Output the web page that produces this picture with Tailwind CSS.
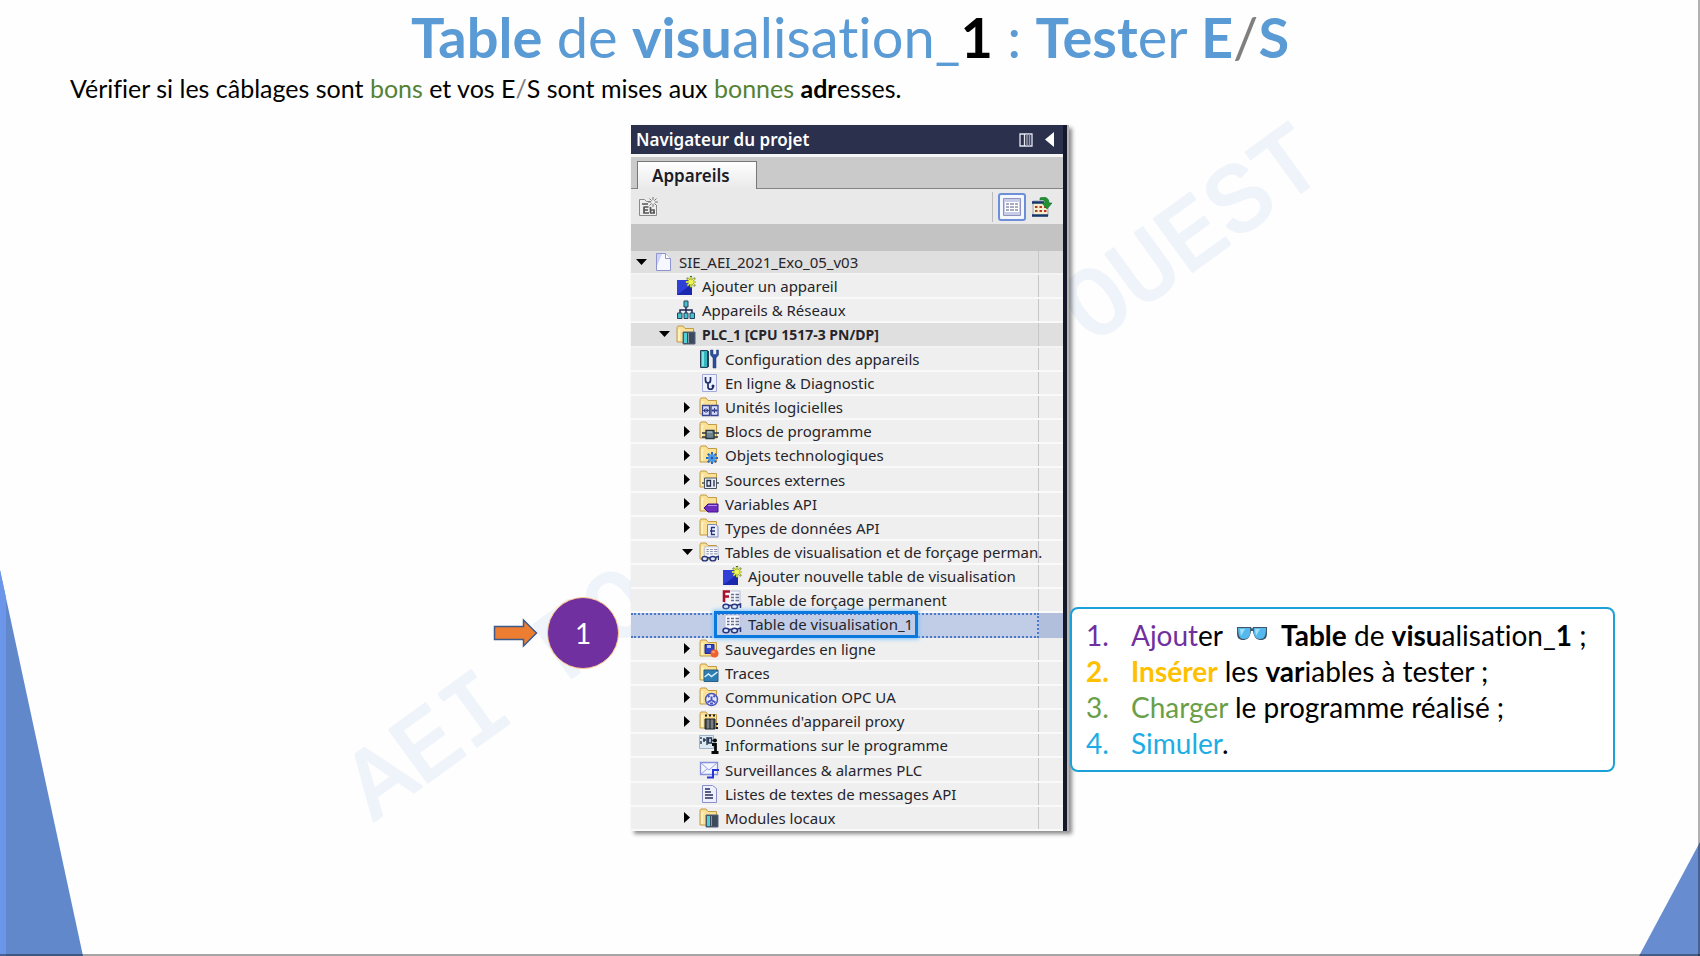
<!DOCTYPE html>
<html lang="fr">
<head>
  <meta charset="UTF-8" />
  <meta name="viewport" content="width=device-width, initial-scale=1.0"/>
  <title>Table de visualisation_1 : Tester E/S</title>
  <script src="https://cdn.jsdelivr.net/npm/@tailwindcss/browser@4"></script>
</head>
<body class="relative min-h-screen overflow-hidden bg-[#fefefe] font-[Lato,sans-serif] text-black [font-variant-ligatures:none]">

  <!-- Icons -->
  <svg class="hidden">
    <symbol id="folder" viewBox="0 0 20 20">
      <path d="M1 17V2.500L2 1h5l2 2.500h8.500V17z" fill="#fbe195" stroke="#c39a45"/>
      <path d="M3 16V5h1.500" fill="none" stroke="#fff6d0" stroke-width="1.500"/>
    </symbol>
    <symbol id="glasses" viewBox="0 0 20 20">
      <g fill="#dfe6fb" stroke="#27357c" stroke-width="1.500">
        <ellipse cx="4" cy="16.500" rx="3" ry="2.300"/><ellipse cx="12.500" cy="16.500" rx="3" ry="2.300"/>
        <path d="M7 15.500h2.500M15.500 15l3-1v4" fill="none"/>
      </g>
    </symbol>
    <symbol id="grid" viewBox="0 0 20 20">
      <path d="M3 1h15v14H3z" fill="#f6f7fc" stroke="#b9bdd6"/>
      <path d="M5 4.500h2.500m1.500 0h3m1.500 0H17M5 7.500h2.500m1.500 0h3m1.500 0H17M5 10.500h2.500m1.500 0h3m1.500 0H17" stroke="#666c91" stroke-width="1.300"/>
    </symbol>
    <symbol id="i-doc" viewBox="0 0 20 20">
      <path d="M3.500 1.500h9l5 5v12h-14z" fill="#f7f8ff" stroke="#8e94cc"/>
      <path d="M4 2h5L4 14z" fill="#cdd3f5"/><path d="M12.500 1.500v5h5" fill="#fff" stroke="#8e94cc"/>
    </symbol>
    <symbol id="i-add" viewBox="0 0 20 20">
      <path d="M1 4h15v15H1z" fill="#2f40d8"/><path d="M1 19L16 8v11z" fill="#1b27ad"/>
      <path d="M15 0v12M9 6h12M11 2l8 8M19 2l-8 8" stroke="#4f6e25" stroke-width="2.200"/>
      <path d="M15 1v10M10 6h10M11.500 2.500l7 7M18.500 2.500l-7 7" stroke="#f3f75a" stroke-width="1.400"/>
    </symbol>
    <symbol id="i-net" viewBox="0 0 20 20">
      <path d="M10 6v4M4 13v-3h12v3M10 10v3" fill="none" stroke="#1d2553" stroke-width="1.500"/>
      <g fill="#45c2cc" stroke="#24405e"><path d="M8 1h4v6H8zM1.500 13h4.500v5.500H1.500zM8 13h4v5.500H8zM14 13h4.500v5.500H14z"/></g>
    </symbol>
    <symbol id="i-plc" viewBox="0 0 20 20">
      <use href="#folder"/><path d="M7 7h12v12H7z" fill="#3c4a5c" stroke="#55627a"/><path d="M8 8h3v10H8z" fill="#4fd0d2"/><path d="M12.500 8v10" stroke="#8b98a8"/>
    </symbol>
    <symbol id="i-config" viewBox="0 0 20 20">
      <path d="M1.500 1.500h7v17h-7z" fill="#35b5bd" stroke="#2c3d55"/><path d="M3 3h2v14H3z" fill="#7be4e4"/><path d="M9.500 2v16" stroke="#2c3d55"/>
      <path d="M11.500 1v5l2.500 3v10h3V9l2.500-3V1l-2 0v4.500h-3.500V1z" fill="#2a4f9c" stroke="#1c3878" stroke-width=".5"/>
    </symbol>
    <symbol id="i-diag" viewBox="0 0 20 20">
      <path d="M3.500 1.500h14v17h-14z" fill="#eef1ff" stroke="#a4aad8"/>
      <path d="M6.500 4v3c0 4 5 4 5 0V4M9 10v4c0 3 5 3 5 0v-.5" fill="none" stroke="#1c2b66" stroke-width="1.700"/><circle cx="14" cy="13" r="1.500" fill="#1c2b66"/>
    </symbol>
    <symbol id="i-units" viewBox="0 0 20 20">
      <use href="#folder"/>
      <path d="M3.500 8.500h7v10h-7zM12 8.500h7v10h-7z" fill="#d5dcfb" stroke="#39458f" stroke-width="1.300"/>
      <path d="M4 13.500h6M12.500 13.500h6M7 11v5M15.500 11v5M5.500 12v3M8.500 12v3M14 12v3M17 12v3" stroke="#39458f"/>
    </symbol>
    <symbol id="i-blocks" viewBox="0 0 20 20">
      <use href="#folder"/><path d="M3 12h5m7 0h5M3 16h16" stroke="#283640" stroke-width="1.500"/>
      <path d="M7 9.500h8v8H7z" fill="#6e8590" stroke="#283640" stroke-width="1.300"/><path d="M8 11h5" stroke="#bdd0d8"/>
    </symbol>
    <symbol id="i-tech" viewBox="0 0 20 20">
      <use href="#folder"/><path d="M13 7v12M7 13h12M8.800 8.800l8.400 8.400M17.200 8.800l-8.400 8.400" stroke="#2868bd" stroke-width="2"/>
      <circle cx="13" cy="13" r="3.700" fill="#4c9bea"/><circle cx="13" cy="13" r="1.300" fill="#225aa8"/>
    </symbol>
    <symbol id="i-src" viewBox="0 0 20 20">
      <use href="#folder"/><path d="M3 13h17" stroke="#4b5562" stroke-width="1.500"/><path d="M5.500 8h12v10.500h-12z" fill="#e9edf5" stroke="#4b5562"/>
      <path d="M8 10.500h3.500v5.500H8zM15 10v6.500" fill="none" stroke="#202b4a" stroke-width="1.300"/>
    </symbol>
    <symbol id="i-var" viewBox="0 0 20 20">
      <use href="#folder"/><path d="M5 14l4-4h10v8H9z" fill="#6c2cc0" stroke="#42158c"/><path d="M9 11.500h9" stroke="#b48af0"/>
    </symbol>
    <symbol id="i-types" viewBox="0 0 20 20">
      <use href="#folder"/><path d="M8.500 6.500h8l2.500 2V19H8.500z" fill="#eceffe" stroke="#8189c0"/>
      <path d="M16 9.500h-3.500v7H16M11 13h5" fill="none" stroke="#283776" stroke-width="1.300"/>
    </symbol>
    <symbol id="i-tables" viewBox="0 0 20 20">
      <use href="#folder"/><g transform="translate(3 4) scale(.9 .75)"><use href="#grid" width="20" height="20"/></g><g transform="translate(2 1)"><use href="#glasses" width="19" height="19"/></g>
    </symbol>
    <symbol id="i-table" viewBox="0 0 20 20"><use href="#grid"/><use href="#glasses"/></symbol>
    <symbol id="i-force" viewBox="0 0 20 20">
      <use href="#grid"/><path d="M0 0h8.500v12H0z" fill="#f3f3f6"/><path d="M2 12V1.500h6M2 6.500h5" fill="none" stroke="#a80f2a" stroke-width="2.600"/><use href="#glasses"/>
    </symbol>
    <symbol id="i-backup" viewBox="0 0 20 20">
      <use href="#folder"/><path d="M6 5.500h9v9H6z" fill="#3045c4" stroke="#1d2c8e"/><path d="M8 6h4v3H8z" fill="#b7c5ff"/><circle cx="15.500" cy="14.500" r="4" fill="#ef6130"/><circle cx="14.500" cy="13" r="1.300" fill="#ffa277"/>
    </symbol>
    <symbol id="i-traces" viewBox="0 0 20 20">
      <use href="#folder"/><path d="M5 7h14v11.500H5z" fill="#2f7eb2" stroke="#285f86"/><path d="M5.500 14l4-3 3 2.500 6-4.500" fill="none" stroke="#d9f2ff" stroke-width="1.500"/>
    </symbol>
    <symbol id="i-opc" viewBox="0 0 20 20">
      <use href="#folder"/><circle cx="12.500" cy="12.500" r="6" fill="#e6e9ff" stroke="#4a57bd" stroke-width="1.500"/>
      <path d="M12.500 9.500v3.500l-4 2.500m4-2.500l4 2.500M9 10l1.500-1.500M16 10l-1.500-1.500M11 16.500h3" fill="none" stroke="#4a57bd" stroke-width="2"/>
    </symbol>
    <symbol id="i-proxy" viewBox="0 0 20 20">
      <use href="#folder"/><path d="M6 4.500h2m2 0h2m2 0h2M17 13h2m-2 4h2" stroke="#161b20" stroke-width="2"/>
      <path d="M6 8h10v10H6z" fill="#474d52" stroke="#1c2226"/><path d="M9 8.500v9M13 8.500v9" stroke="#a9b0b4"/>
    </symbol>
    <symbol id="i-info" viewBox="0 0 20 20">
      <path d="M.5.500h14v13H.5z" fill="#dce9f3" stroke="#9fb4c8"/><path d="M2 2v2m0 2v3M4 5h3M5 3v4M8 2v8M9.500 3h3v5h-3zM13 5.500h4" fill="none" stroke="#26364f" stroke-width="1.400"/>
      <path d="M13 9.500h3.500V17M12.500 17.500h7" fill="none" stroke="#080808" stroke-width="2.800"/><circle cx="16" cy="5.500" r="2" fill="#080808"/>
    </symbol>
    <symbol id="i-alarm" viewBox="0 0 20 20">
      <path d="M1.500 2.500h17v12h-17z" fill="#f3f5ff" stroke="#8791dc" stroke-width="1.300"/><path d="M2 3l8 7 8-7M2 14l6-5" fill="none" stroke="#98a1e2"/>
      <path d="M8 17.500h6V10h6" fill="none" stroke="#2836d8" stroke-width="2"/>
    </symbol>
    <symbol id="i-list" viewBox="0 0 20 20">
      <path d="M3.500 1.500h10l4 3v14h-14z" fill="#eef0ff" stroke="#8a91c8"/><path d="M6 5h5M6 8h6M6 11h8M6 14h8" stroke="#273158" stroke-width="1.600"/>
    </symbol>
  </svg>

  <!-- Slide background -->
  <svg class="absolute left-1/2 top-0 -translate-x-1/2" width="1700" height="956" viewBox="0 0 1700 956" aria-hidden="true">
    <g fill="#eff4fa" stroke="#eff4fa" stroke-width="3" stroke-linejoin="round" font-family="Liberation Mono, monospace" font-size="98">
      <text transform="translate(374 821) rotate(-36)">AEI FO</text>
      <text transform="translate(1091 345) rotate(-36)">OUEST</text>
    </g>
  </svg>
  <svg class="absolute bottom-0 left-0" width="83" height="386" viewBox="0 0 83 386" aria-hidden="true">
    <path d="M0 0l83 386H0z" fill="#6088cb"/><path d="M0 0l6 28v358H0z" fill="#6b96ea"/>
  </svg>
  <svg class="absolute bottom-0 right-0" width="61" height="114" viewBox="0 0 61 114" aria-hidden="true">
    <path d="M61 0v114H0z" fill="#678ccf"/>
  </svg>
  <div class="absolute inset-x-0 bottom-0 h-[2px] bg-black/35"></div>
  <div class="absolute inset-y-0 right-0 w-[2px] bg-black/30"></div>

  <div class="relative">
    <h1 class="h-[73px] text-center text-[56px] leading-[73px] text-[#5b9bd5]"><b>Table</b> de <b>visu</b>alisation_<b class="text-black">1</b> : <b>Test</b>er <b>E</b><span class="text-[#7f7f7f]">/</span><b>S</b></h1>
    <p class="h-[52px] px-[70px] text-[25px] leading-[30px]">Vérifier si les câblages sont <span class="text-[#548235]">bons</span> et vos E<span class="text-[#7f7f7f]">/</span>S sont mises aux <span class="text-[#548235]">bonnes</span> <b>adr</b>esses.</p>

    <main class="grid grid-cols-[1fr_438px_1fr] items-start">
      <!-- Step marker -->
      <div class="mt-[472px] flex items-center justify-end gap-[9px] pr-[12px]">
        <svg width="45" height="30" viewBox="0 0 45 30" aria-hidden="true"><path d="M1.500 8.500h29V2l13 13-13 13v-6.500h-29z" fill="#ed7d31" stroke="#3d5a8c" stroke-width="1.500"/></svg>
        <div class="flex size-[72px] items-center justify-center rounded-full border border-[#ffc98a] bg-[#7030a0] text-[28px] text-white">1</div>
      </div>

      <!-- Project navigator -->
      <section class="border-r-2 border-[#b5b5b5] font-['Noto_Sans',sans-serif] shadow-[3px_3px_4px_rgba(0,0,0,0.45)]">
        <div class="border-r-[4px] border-[#15182a] bg-[#f5f5f5]">
          <header class="flex h-[29px] items-center bg-[#2b304c] pl-[5px] pr-[9px] text-white">
            <h2 class="flex-1 text-[17px] leading-[28px] font-semibold">Navigateur du projet</h2>
            <button class="mr-[12px]" aria-label="Réduire automatiquement">
              <svg width="14" height="14" viewBox="0 0 14 14"><path d="M1 1h12v12H1zM5.500 1v12" fill="none" stroke="#e5e7ef" stroke-width="1.300"/><path d="M8 1v12M10.500 1v12" stroke="#9499ae" stroke-width="1.500"/></svg>
            </button>
            <button aria-label="Réduire">
              <svg width="9" height="15" viewBox="0 0 9 15"><path d="M9 0v15L0 7.500z" fill="#fff"/></svg>
            </button>
          </header>
          <div class="mt-[3px] flex h-[32px] items-end border-b border-[#858585] bg-[#cacaca] pl-[6px]">
            <button class="-mb-px h-[28px] w-[120px] border border-b-0 border-[#777] bg-linear-to-b from-white to-[#e9e9e9] pl-[14px] text-left text-[17px] leading-[24px] font-semibold text-[#1c1c28]">Appareils</button>
          </div>
          <div class="flex h-[35px] items-center bg-[#e9e9e9] pl-[7px] pr-[11px]">
            <button class="mr-auto" aria-label="Ajouter un groupe">
              <svg width="21" height="20" viewBox="0 0 21 20"><path d="M1.500 18.500v-16h5l2 2h6M1.500 18.500h17V8" fill="#efefef" stroke="#8a8a8a"/><path d="M4 7h6M5.500 10h5M6 10v6h5M6 13h4M12.500 10v6m0-3h3.500v3m-4 0h5" fill="none" stroke="#555" stroke-width="1.700"/><path d="M15 0v10M10 5h10M11.500 1.500l7 7M18.500 1.500l-7 7" stroke="#777"/><circle cx="15" cy="5" r="2" fill="#eee"/></svg>
            </button>
            <span class="mr-[5px] h-[30px] w-px bg-[#bcbcbc]"></span>
            <button class="mr-[6px] flex size-[28px] items-center justify-center rounded-[3px] border-2 border-[#6c8fd8] bg-[#f5f7ff]" aria-label="Vue détaillée">
              <svg width="18" height="18" viewBox="0 0 18 18"><path d="M.5.500h17v17H.5z" fill="#c8cce8" stroke="#8f94bd"/><path d="M2 4h14v10H2z" fill="#fff"/><path d="M3 6h3m1 0h4m1 0h3M3 9h3m1 0h4m1 0h3M3 12h3m1 0h4m1 0h3" stroke="#555b80" stroke-width="1.200"/></svg>
            </button>
            <button aria-label="Vue d'ensemble">
              <svg width="20" height="20" viewBox="0 0 20 20"><path d="M1 4h15v15H1z" fill="#f6ecd0" stroke="#9fa9b8"/><path d="M0 5.500h12M0 18.500h16" stroke="#17386e" stroke-width="2.500"/><path d="M3 10h2.500m2 0H10m2 0h2.500M3 14h2.500m2 0H10m2 0h2.500" stroke="#b53b20" stroke-width="2.200"/><path d="M8 1c5-2 9 0 9 5h3l-5 6-5-6h3c0-3-2-4-5-3z" fill="#209335" stroke="#116c24" stroke-width=".6"/></svg>
            </button>
          </div>
          <div class="h-[27px] bg-[#c3c3c3]"></div>
          <ul id="tree" role="tree" class="grid h-[580px] auto-rows-fr grid-cols-1 text-[15px] leading-[20px] text-[#25252b]"></ul>
        </div>
      </section>

      <!-- Instructions -->
      <div class="mt-[482px] mr-[85px] ml-px rounded-[8px] border-2 border-[#1ba1d8] bg-white pt-[8px] pr-[10px] pb-[9px] pl-[14px] text-[28px] leading-[36px] whitespace-nowrap">
        <ol>
          <li class="flex"><span class="w-[45px] text-[#7030a0]">1.</span><span><span class="text-[#7030a0]">Ajout</span>er</span>
            <svg class="mx-[13px] mt-[8px]" width="32" height="18" viewBox="0 0 32 18" aria-hidden="true"><path d="M1 2h14l1 2 1-2h14v6c0 5-2 7-6 7s-7-2-8-9h-2c-1 7-4 9-8 9S1 13 1 8z" fill="#40566b"/><path d="M2 3h12c1 7-1 11-6 11-4 0-6-3-6-11zM18 3h12c0 8-2 11-6 11-5 0-7-4-6-11z" fill="#55b9ed"/><path d="M4 4h5l-4 7zM19 4h5l-4 7z" fill="#a3dffb"/></svg>
            <span><b>Table</b> de <b>visu</b>alisation_<b>1</b> ;</span></li>
          <li class="flex"><b class="w-[45px] text-[#ffc000]">2.</b><span><b class="text-[#ffc000]">Insérer</b> les <b>var</b>iables à tester ;</span></li>
          <li class="flex"><span class="w-[45px] text-[#6a9f48]">3.</span><span><span class="text-[#6a9f48]">Charger</span> le programme réalisé ;</span></li>
          <li class="flex"><span class="w-[45px] text-[#1cade4]">4.</span><span><span class="text-[#1cade4]">Simuler</span>.</span></li>
        </ol>
      </div>
    </main>
  </div>

  <script>
    // level, icon, label, state (open / closed)
    const items = [
      [0, 'i-doc', 'SIE_AEI_2021_Exo_05_v03', 'open'],
      [1, 'i-add', 'Ajouter un appareil'],
      [1, 'i-net', 'Appareils & Réseaux'],
      [1, 'i-plc', 'PLC_1 [CPU 1517-3 PN/DP]', 'open'],
      [2, 'i-config', 'Configuration des appareils'],
      [2, 'i-diag', 'En ligne & Diagnostic'],
      [2, 'i-units', 'Unités logicielles', 'closed'],
      [2, 'i-blocks', 'Blocs de programme', 'closed'],
      [2, 'i-tech', 'Objets technologiques', 'closed'],
      [2, 'i-src', 'Sources externes', 'closed'],
      [2, 'i-var', 'Variables API', 'closed'],
      [2, 'i-types', 'Types de données API', 'closed'],
      [2, 'i-tables', 'Tables de visualisation et de forçage perman.', 'open'],
      [3, 'i-add', 'Ajouter nouvelle table de visualisation'],
      [3, 'i-force', 'Table de forçage permanent'],
      [3, 'i-table', 'Table de visualisation_1', 'selected'],
      [2, 'i-backup', 'Sauvegardes en ligne', 'closed'],
      [2, 'i-traces', 'Traces', 'closed'],
      [2, 'i-opc', 'Communication OPC UA', 'closed'],
      [2, 'i-proxy', "Données d'appareil proxy", 'closed'],
      [2, 'i-info', 'Informations sur le programme'],
      [2, 'i-alarm', 'Surveillances & alarmes PLC'],
      [2, 'i-list', 'Listes de textes de messages API'],
      [2, 'i-plc', 'Modules locaux', 'closed']
    ];

    const arrows = {
      open: '<svg width="11" height="7" viewBox="0 0 11 7"><path d="M0 0h11L5.500 6z"/></svg>',
      closed: '<svg class="ml-[2px]" width="6" height="11" viewBox="0 0 6 11"><path d="M0 0v11l6-5.500z"/></svg>'
    };

    document.getElementById('tree').innerHTML = items.map(([level, icon, label, state]) => {
      const selected = state === 'selected';
      let bg = 'bg-[#efefef] border-b-2 border-[#f9f9f9]';
      if (label.startsWith('SIE') || label.startsWith('PLC')) bg = 'bg-[#dfdfdf] border-b-2 border-[#f3f3f3]';
      if (selected) bg = 'bg-[#b1bfdc]';
      let cell = 'border-r border-[#c6c6c6]';
      if (selected) cell = 'bg-[#c1cde7] border-2 border-l-0 border-dotted border-[#4c78c8] pb-[3px]';
      const frame = selected ? '<span class="absolute -top-[3px] -right-[5px] -bottom-[4px] -left-[8px] border-[3px] border-[#0a78dc] shadow-[0_0_4px_1px_#7cc4ff]"></span>' : '';
      return `
        <li role="treeitem" class="flex min-h-0 pr-[24px] ${bg}">
          <div class="flex min-w-0 flex-1 items-center whitespace-nowrap ${cell} ${label.startsWith('PLC') ? 'text-[14px] font-bold' : ''}" style="padding-left:${5 + 23 * level}px">
            <span class="w-[17px] shrink-0">${arrows[state] || ''}</span>
            <span class="relative flex items-center gap-[6px]">${frame}<svg class="shrink-0" width="20" height="20"><use href="#${icon}"/></svg>${label.replace('&', '&amp;')}</span>
          </div>
        </li>`;
    }).join('');
  </script>
</body>
</html>
